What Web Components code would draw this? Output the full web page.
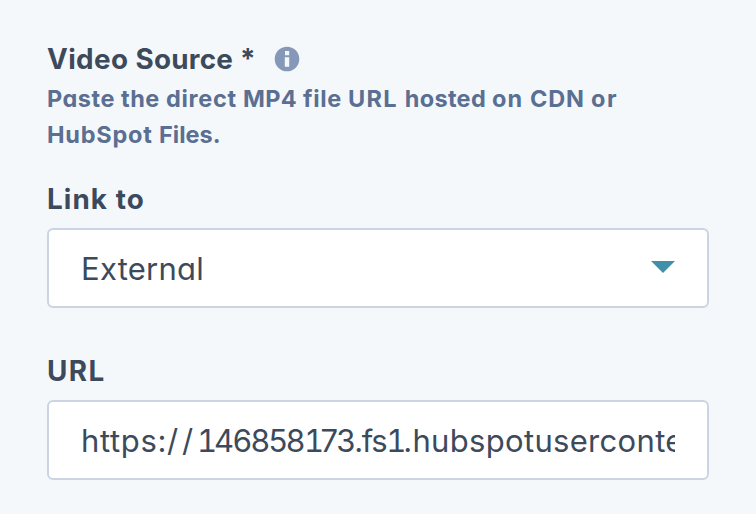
<!DOCTYPE html>
<html lang="en"><head><meta charset="utf-8"><title>Video Source</title>
<style>
body{margin:0;background:#f5f8fb;color:#3c4a5c;font-family:Inter,"Open Sans",sans-serif;font-feature-settings:"cv11","calt" 0}
</style></head><body>
<settings-panel></settings-panel>
<script>
function define(name, html){
  customElements.define(name, class extends HTMLElement{
    constructor(){super();this.attachShadow({mode:'open'}).innerHTML=html;}
  });
}
define('info-icon',`<style>:host{display:block;width:26px;height:26px}svg{display:block}</style>
<svg width="26" height="26" viewBox="0 0 26 26"><circle cx="13" cy="13" r="12.3" fill="#8598b7"/><path fill="#f5f8fb" d="M11 5h4.2v4.2H11zM10.8 11.2h4.4v9.6h-4.4z"/></svg>`);
define('field-label',`<style>:host{display:flex;align-items:center;height:36px;font-size:27.8px;font-weight:690;line-height:36px;white-space:pre}</style><div><slot></slot></div>`);
define('help-text',`<style>:host{display:block;font-size:23.5px;font-weight:690;line-height:36px;color:#5a6f92;white-space:pre}</style><slot></slot>`);
define('input-box',`<style>:host{display:flex;align-items:center;box-sizing:border-box;width:662px;height:80px;border:2px solid #cbd4e2;border-radius:6px;background:#fff;padding:0 32px;font-size:31px;font-weight:380;line-height:40px}
.v{flex:1;min-width:0;overflow:hidden;white-space:nowrap;padding-top:1px}</style><div class="v"><slot></slot></div><slot name="end"></slot>`);
define('caret-icon',`<style>:host{display:block;margin-bottom:2px}svg{display:block}</style><svg width="24" height="12" viewBox="0 0 24 12"><path d="M0 0h24L12 12z" fill="#4190a9"/></svg>`);

/* Inline text tracked so that its advance equals the "w" attribute. */
customElements.define('text-run', class extends HTMLElement{
  constructor(){super();this.attachShadow({mode:'open'}).innerHTML='<style>:host{display:inline;white-space:pre}:host([tabular]){font-feature-settings:"cv11","tnum","calt" 0}</style><slot></slot>';}
  fit(){
    const natural=this.getBoundingClientRect().width;
    this.style.letterSpacing=((+this.getAttribute('w')-natural)/this.textContent.length)+'px';
  }
});
define('settings-panel',`<style>:host{display:block;padding:41px 47px 0;box-sizing:border-box;height:514px}
.head{display:flex;align-items:center;gap:20px;height:36px;margin-bottom:4px}
.link{margin-top:28px}.select{margin-top:11px}.url{margin-top:45px}.input{margin-top:11px}
</style>
<div class="head"><field-label><text-run w="88.5">Video </text-run><text-run w="104.5">Source </text-run><text-run w="14">*</text-run></field-label><info-icon></info-icon></div>
<help-text><text-run w="74">Paste </text-run><text-run w="45">the </text-run><text-run w="77">direct </text-run><text-run w="60">MP4 </text-run><text-run w="45">file </text-run><text-run w="56.7">URL </text-run><text-run w="87.3">hosted </text-run><text-run w="38">on </text-run><text-run w="61">CDN </text-run><text-run w="27">or</text-run><br><text-run w="112">HubSpot </text-run><text-run w="61.5">Files.</text-run></help-text>
<field-label class="link"><text-run w="68.7">Link </text-run><text-run w="29">to</text-run></field-label>
<input-box class="select"><text-run w="123">External</text-run><caret-icon slot="end"></caret-icon></input-box>
<field-label class="url"><text-run w="58.5">URL</text-run></field-label>
<input-box class="input"><text-run w="86">https:</text-run><text-run w="30">//</text-run><text-run w="17" tabular>1</text-run><text-run w="90">46858</text-run><text-run w="16.5" tabular>1</text-run><text-run w="33">73</text-run><text-run w="32">.fs</text-run><text-run w="17" tabular>1</text-run><text-run w="280.5">.hubspotuserconte</text-run></input-box>`);
document.querySelector('settings-panel').shadowRoot.querySelectorAll('text-run').forEach(r=>r.fit());
</script>
</body></html>
